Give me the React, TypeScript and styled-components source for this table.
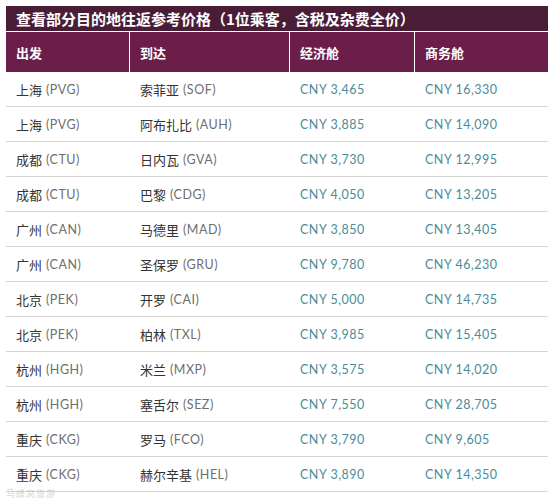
import React from "react";
import styled, { createGlobalStyle } from "styled-components";

const Global = createGlobalStyle`
  html, body { margin: 0; padding: 0; background: #fff; }
  body { font-family: "Noto Sans CJK SC", sans-serif; }
`;

const Page = styled.div`
  position: relative;
  width: 554px;
  height: 499px;
  padding: 6px 6px 0 6px;
  box-sizing: border-box;
  overflow: hidden;
`;

const Title = styled.div`
  height: 25px;
  background: #4a1d37;
  color: #fff;
  font-family: "Noto Sans CJK SC", sans-serif;
  font-weight: 700;
  font-size: 15px;
  line-height: 25px;
  padding-left: 10px;
  border-bottom: 1px solid #fff;
  white-space: nowrap;
`;

const Grid = styled.div`
  display: grid;
  grid-template-columns: 124px 160px 125px 133px;
`;

const Head = styled.div<{ $last?: boolean }>`
  height: 40px;
  background: #6c1e4b;
  color: #fff;
  font-family: "Noto Sans CJK SC", sans-serif;
  font-weight: 700;
  font-size: 13px;
  display: flex;
  align-items: center;
  padding-left: 10px;
  border-right: ${(p) => (p.$last ? "none" : "1px solid #fff")};
`;

const Cell = styled.div`
  height: 35px;
  box-sizing: border-box;
  border-bottom: 1px solid #d4d4d4;
  display: flex;
  align-items: center;
  padding-left: 10px;
  padding-top: 1px;
  font-size: 13px;
  white-space: nowrap;
`;

const City = styled.span`
  color: #333;
  font-family: "Noto Sans CJK SC", sans-serif;
`;

const Code = styled.span`
  color: #6e6e6e;
  font-family: Lato, "Open Sans", sans-serif;
  font-weight: 400;
  font-size: 12.5px;
  letter-spacing: 0.5px;
  margin-left: 4px;
`;

const Price = styled.span`
  color: #4a8c99;
  font-family: Lato, "Open Sans", sans-serif;
  font-weight: 400;
  font-size: 12.5px;
  letter-spacing: 0.5px;
`;

const Watermark = styled.div`
  position: absolute;
  left: 6px;
  bottom: 0;
  color: rgba(170, 170, 170, 0.5);
  font-family: "Noto Sans CJK SC", sans-serif;
  font-size: 9px;
  line-height: 10px;
  letter-spacing: 1px;
`;

const rows: [string, string, string, string, string, string][] = [
  ["上海", "PVG", "索菲亚", "SOF", "3,465", "16,330"],
  ["上海", "PVG", "阿布扎比", "AUH", "3,885", "14,090"],
  ["成都", "CTU", "日内瓦", "GVA", "3,730", "12,995"],
  ["成都", "CTU", "巴黎", "CDG", "4,050", "13,205"],
  ["广州", "CAN", "马德里", "MAD", "3,850", "13,405"],
  ["广州", "CAN", "圣保罗", "GRU", "9,780", "46,230"],
  ["北京", "PEK", "开罗", "CAI", "5,000", "14,735"],
  ["北京", "PEK", "柏林", "TXL", "3,985", "15,405"],
  ["杭州", "HGH", "米兰", "MXP", "3,575", "14,020"],
  ["杭州", "HGH", "塞舌尔", "SEZ", "7,550", "28,705"],
  ["重庆", "CKG", "罗马", "FCO", "3,790", "9,605"],
  ["重庆", "CKG", "赫尔辛基", "HEL", "3,890", "14,350"],
];

export default function App() {
  return (
    <>
      <Global />
      <Page>
        <Title>查看部分目的地往返参考价格（1位乘客，含税及杂费全价）</Title>
        <Grid>
          <Head>出发</Head>
          <Head>到达</Head>
          <Head>经济舱</Head>
          <Head $last>商务舱</Head>
          {rows.map((r, i) => (
            <React.Fragment key={i}>
              <Cell>
                <City>{r[0]}</City>
                <Code>({r[1]})</Code>
              </Cell>
              <Cell>
                <City>{r[2]}</City>
                <Code>({r[3]})</Code>
              </Cell>
              <Cell>
                <Price>CNY {r[4]}</Price>
              </Cell>
              <Cell>
                <Price>CNY {r[5]}</Price>
              </Cell>
            </React.Fragment>
          ))}
        </Grid>
        <Watermark>马蜂窝旅游</Watermark>
      </Page>
    </>
  );
}
